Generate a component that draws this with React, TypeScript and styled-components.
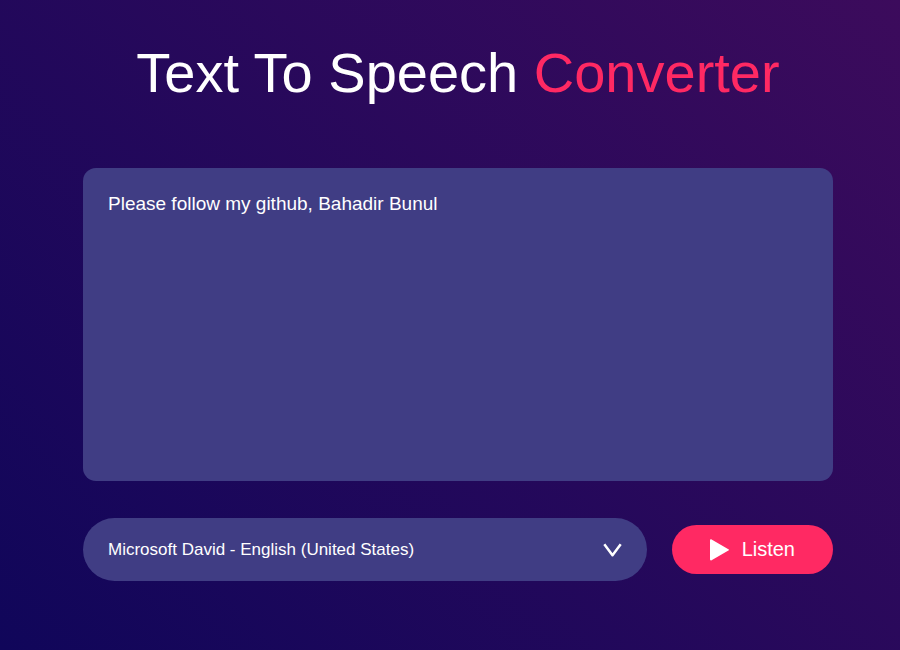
import React, { useState } from "react";
import styled, { createGlobalStyle } from "styled-components";

const GlobalStyle = createGlobalStyle`
  * {
    margin: 0;
    padding: 0;
    box-sizing: border-box;
    font-family: "Liberation Sans", Arial, sans-serif;
  }
`;

const Page = styled.main`
  min-height: 100vh;
  padding: 41px 67px 68px 83px;
  background: linear-gradient(45deg, #10065a, #3c0b5c);
  display: flex;
  flex-direction: column;
  align-items: center;
  color: #fff;
`;

const Title = styled.h1`
  font-size: 56px;
  font-weight: 500;
  line-height: 64px;
  margin-bottom: 63px;
  text-align: center;

  span {
    color: #ff2963;
  }
`;

const Converter = styled.form`
  width: 100%;
  max-width: 750px;
`;

const SpeechText = styled.textarea`
  display: block;
  width: 100%;
  height: 313px;
  padding: 25px;
  margin-bottom: 37px;
  border: 0;
  outline: 0;
  border-radius: 13px;
  resize: none;
  background: #403d84;
  color: #fff;
  font-size: 19px;
  line-height: 21px;
`;

const Controls = styled.div`
  display: flex;
  align-items: center;
  gap: 25px;
`;

const VoicePicker = styled.div`
  flex: 1;
  display: grid;
  align-items: center;

  > * {
    grid-area: 1 / 1;
  }

  svg {
    justify-self: end;
    margin-right: 25px;
    pointer-events: none;
  }
`;

const VoiceSelect = styled.select`
  width: 100%;
  height: 63px;
  padding: 0 25px;
  border: 0;
  outline: 0;
  border-radius: 32px;
  appearance: none;
  background: #403d84;
  color: #fff;
  font-size: 17px;
`;

const ListenButton = styled.button`
  display: flex;
  align-items: center;
  gap: 13px;
  height: 49px;
  padding: 0 38px;
  border: 0;
  border-radius: 25px;
  background: #ff2963;
  color: #fff;
  font-size: 20px;
  cursor: pointer;
`;

export default function App() {
  const [text, setText] = useState("Please follow my github, Bahadir Bunul");

  return (
    <Page>
      <GlobalStyle />
      <Title>
        Text To Speech <span>Converter</span>
      </Title>
      <Converter onSubmit={(e) => e.preventDefault()}>
        <SpeechText
          aria-label="Text to read aloud"
          spellCheck={false}
          value={text}
          onChange={(e) => setText(e.target.value)}
        />
        <Controls>
          <VoicePicker>
            <VoiceSelect aria-label="Voice">
              <option>Microsoft David - English (United States)</option>
            </VoiceSelect>
            <svg width="19" height="14" viewBox="0 0 19 14" fill="none" aria-hidden="true">
              <path d="M1.3 1.2L9.5 12.2L17.7 1.2" stroke="#fff" strokeWidth="2.5" strokeLinejoin="round" />
            </svg>
          </VoicePicker>
          <ListenButton type="submit">
            <svg width="19" height="22" viewBox="0 0 19 22" fill="#fff" aria-hidden="true">
              <path d="M0 1.2C0 .4.8.1 1.6.6L18.4 10.2C19.2 10.7 19.2 11.1 18.4 11.6L1.6 21.2C.8 21.7 0 21.4 0 20.6Z" />
            </svg>
            Listen
          </ListenButton>
        </Controls>
      </Converter>
    </Page>
  );
}
